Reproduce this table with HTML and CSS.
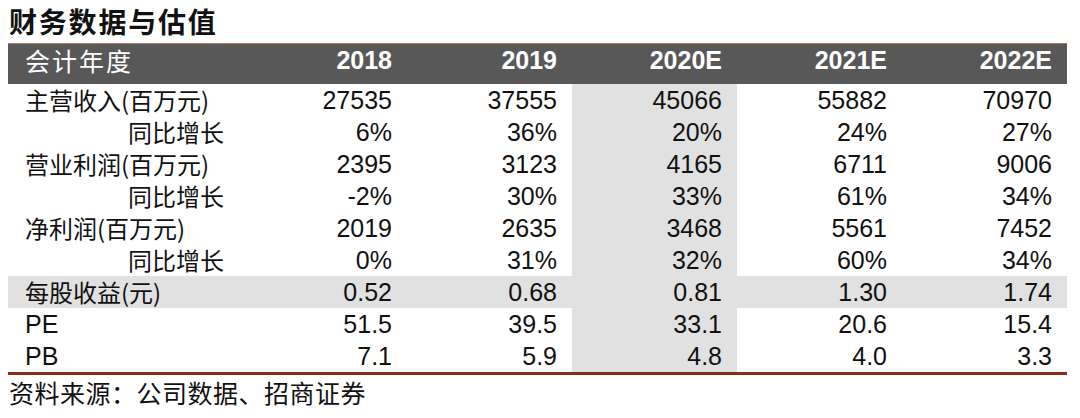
FILE: index.html
```html
<!DOCTYPE html>
<html lang="zh-CN">
<head>
<meta charset="utf-8">
<title>财务数据与估值</title>
<link rel="stylesheet" href="styles.css">
</head>
<body>
<div class="page">
  <h1 class="title">财务数据与估值</h1>
  <div class="table">
    <div class="row head">
      <div class="cell label">会计年度</div>
      <div class="cell num">2018</div>
      <div class="cell num">2019</div>
      <div class="cell num">2020E</div>
      <div class="cell num">2021E</div>
      <div class="cell num">2022E</div>
    </div>
    <div class="row">
      <div class="cell label">主营收入(百万元)</div>
      <div class="cell num">27535</div><div class="cell num">37555</div><div class="cell num hl">45066</div><div class="cell num">55882</div><div class="cell num">70970</div>
    </div>
    <div class="row">
      <div class="cell label sub">同比增长</div>
      <div class="cell num">6%</div><div class="cell num">36%</div><div class="cell num hl">20%</div><div class="cell num">24%</div><div class="cell num">27%</div>
    </div>
    <div class="row">
      <div class="cell label">营业利润(百万元)</div>
      <div class="cell num">2395</div><div class="cell num">3123</div><div class="cell num hl">4165</div><div class="cell num">6711</div><div class="cell num">9006</div>
    </div>
    <div class="row">
      <div class="cell label sub">同比增长</div>
      <div class="cell num">-2%</div><div class="cell num">30%</div><div class="cell num hl">33%</div><div class="cell num">61%</div><div class="cell num">34%</div>
    </div>
    <div class="row">
      <div class="cell label">净利润(百万元)</div>
      <div class="cell num">2019</div><div class="cell num">2635</div><div class="cell num hl">3468</div><div class="cell num">5561</div><div class="cell num">7452</div>
    </div>
    <div class="row">
      <div class="cell label sub">同比增长</div>
      <div class="cell num">0%</div><div class="cell num">31%</div><div class="cell num hl">32%</div><div class="cell num">60%</div><div class="cell num">34%</div>
    </div>
    <div class="row shade">
      <div class="cell label">每股收益(元)</div>
      <div class="cell num">0.52</div><div class="cell num">0.68</div><div class="cell num hl">0.81</div><div class="cell num">1.30</div><div class="cell num">1.74</div>
    </div>
    <div class="row">
      <div class="cell label latin">PE</div>
      <div class="cell num">51.5</div><div class="cell num">39.5</div><div class="cell num hl">33.1</div><div class="cell num">20.6</div><div class="cell num">15.4</div>
    </div>
    <div class="row">
      <div class="cell label latin">PB</div>
      <div class="cell num">7.1</div><div class="cell num">5.9</div><div class="cell num hl">4.8</div><div class="cell num">4.0</div><div class="cell num">3.3</div>
    </div>
  </div>
  <div class="source">资料来源：公司数据、招商证券</div>
</div>
</body>
</html>
```

FILE: styles.css
```css
html, body {
  margin: 0;
  padding: 0;
  background: #ffffff;
}

.page {
  width: 1080px;
  height: 418px;
  overflow: hidden;
  font-family: "Liberation Sans", Arial, "Noto Sans CJK SC", sans-serif;
  color: #111111;
}

.title {
  margin: 0;
  padding: 0 0 0 9px;
  height: 43px;
  line-height: 43px;
  font-family: "Noto Sans CJK SC", sans-serif;
  font-size: 28px;
  font-weight: 700;
  color: #111111;
  letter-spacing: 1.8px;
}

.table {
  margin-left: 8px;
  width: 1059px;
  border-top: 1px solid #b07a60;
  border-bottom: 3px solid #8a2c16;
}

.row {
  display: grid;
  grid-template-columns: 234px 165px 165px 165px 165px 165px;
  height: 32px;
}

.row.head {
  height: 40px;
  background: #585858;
  color: #ffffff;
}

.row.shade {
  background: #e1e1e1;
}

.cell {
  font-size: 25px;
  line-height: 32px;
  white-space: nowrap;
}

.num {
  text-align: right;
  padding-right: 15px;
  font-family: "Liberation Sans", Arial, sans-serif;
}

.head .num {
  font-weight: 700;
}

.hl {
  background: #e1e1e1;
}

.label {
  padding-left: 17px;
  font-family: "Noto Sans CJK SC", sans-serif;
  font-size: 24px;
}

.head .label {
  font-size: 25px;
  letter-spacing: 2px;
}

.label.latin {
  font-family: "Liberation Sans", Arial, sans-serif;
  font-size: 25px;
}

.label.sub {
  padding-left: 120px;
}

.source {
  padding-left: 9px;
  height: 40px;
  line-height: 34px;
  font-family: "Noto Sans CJK SC", sans-serif;
  font-size: 25px;
  letter-spacing: 0.5px;
  color: #111111;
}
```
